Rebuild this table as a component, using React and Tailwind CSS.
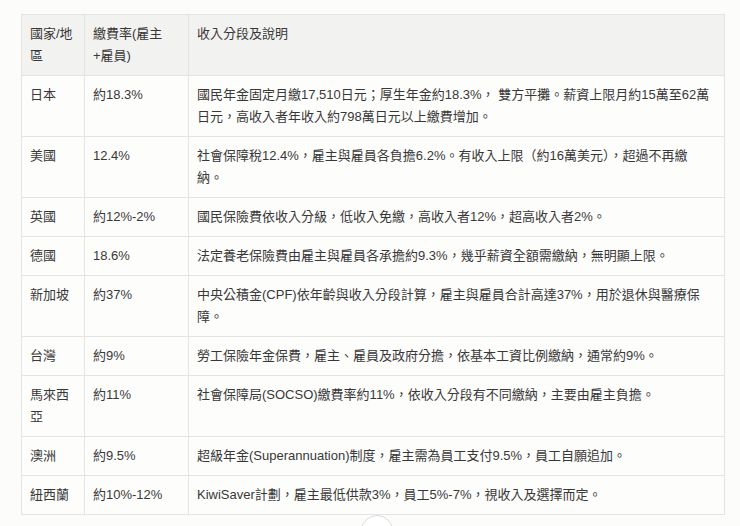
import React from "react";

const rows = [
  ["日本", "約18.3%", "國民年金固定月繳17,510日元；厚生年金約18.3%， 雙方平攤。薪資上限月約15萬至62萬日元，高收入者年收入約798萬日元以上繳費增加。"],
  ["美國", "12.4%", <>社會保障稅12.4%，雇主與雇員各負擔6.2%。有收入上限（約16萬美元），超過不再繳<br />納。</>],
  ["英國", "約12%-2%", "國民保險費依收入分級，低收入免繳，高收入者12%，超高收入者2%。"],
  ["德國", "18.6%", "法定養老保險費由雇主與雇員各承擔約9.3%，幾乎薪資全額需繳納，無明顯上限。"],
  ["新加坡", "約37%", "中央公積金(CPF)依年齡與收入分段計算，雇主與雇員合計高達37%，用於退休與醫療保障。"],
  ["台灣", "約9%", "勞工保險年金保費，雇主、雇員及政府分擔，依基本工資比例繳納，通常約9%。"],
  ["馬來西亞", "約11%", "社會保障局(SOCSO)繳費率約11%，依收入分段有不同繳納，主要由雇主負擔。"],
  ["澳洲", "約9.5%", "超級年金(Superannuation)制度，雇主需為員工支付9.5%，員工自願追加。"],
  ["紐西蘭", "約10%-12%", "KiwiSaver計劃，雇主最低供款3%，員工5%-7%，視收入及選擇而定。"],
];

const cell = "border border-[#e4e4e2] px-2 py-2 align-top text-left font-normal";

export default function App() {
  return (
    <div
      className="relative w-[740px] h-[526px] overflow-hidden bg-[#fcfcfb] pt-[14px] pl-[21px] text-[13px] leading-[22px] text-[#383838]"
      style={{ fontFamily: '"Liberation Sans", "Noto Sans CJK TC", sans-serif' }}
    >
      <table className="w-[703px] table-fixed border-collapse">
        <colgroup>
          <col className="w-[63px]" />
          <col className="w-[104px]" />
          <col className="w-[536px]" />
        </colgroup>
        <thead>
          <tr className="bg-[#f2f2f0]">
            <th className={cell}>國家/地區</th>
            <th className={cell}>繳費率(雇主+雇員)</th>
            <th className={cell}>收入分段及說明</th>
          </tr>
        </thead>
        <tbody className="bg-[#fdfdfc]">
          {rows.map((r) => (
            <tr key={r[0]}>
              <td className={cell}>{r[0]}</td>
              <td className={cell}>{r[1]}</td>
              <td className={cell}>{r[2]}</td>
            </tr>
          ))}
        </tbody>
      </table>
      <div className="absolute left-[361px] top-[515px] flex h-[32px] w-[32px] items-center justify-center rounded-full border border-[#dcdcda] bg-white">
        <svg width="14" height="14" viewBox="0 0 24 24" fill="none" stroke="#444" strokeWidth="2" strokeLinecap="round" strokeLinejoin="round">
          <path d="M12 5v14" />
          <path d="M19 12l-7 7-7-7" />
        </svg>
      </div>
    </div>
  );
}
